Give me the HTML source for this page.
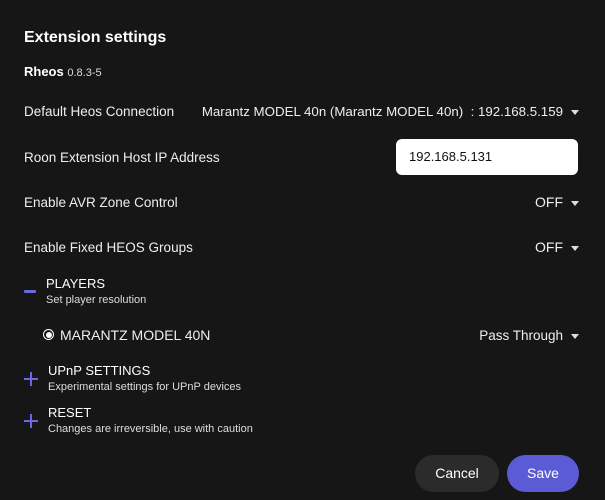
<!DOCTYPE html><html><head><style>
body{margin:0;width:605px;height:500px;background:#161616;font-family:"Liberation Sans",sans-serif;color:#fff;position:relative;overflow:hidden}
.a{position:absolute;white-space:nowrap}
.r{font-size:14px;color:#eee}
.s{font-size:11px;color:#ddd}
.arr{display:inline-block;width:0;height:0;border-left:4px solid transparent;border-right:4px solid transparent;border-top:5px solid #ddd;margin-left:8px;vertical-align:middle}
.pl{position:absolute;background:#6a6ae0}
</style></head><body>
<div class="a" style="left:24px;top:29px;font-size:16px;font-weight:bold">Extension settings</div>
<div class="a" style="left:24px;top:64px;font-size:13px"><b>Rheos</b> <span style="font-size:11px;color:#ddd">0.8.3-5</span></div>
<div class="a r" style="left:24px;top:104px;font-size:13.5px">Default Heos Connection</div>
<div class="a r" style="right:26px;top:104px;font-size:13.3px">Marantz MODEL 40n (Marantz MODEL 40n) &nbsp;: 192.168.5.159<span class="arr"></span></div>
<div class="a r" style="left:24px;top:150px;font-size:13.5px">Roon Extension Host IP Address</div>
<div class="a" style="left:396px;top:139px;width:182px;height:36px;background:#fff;border-radius:6px;color:#111;font-size:13px;line-height:36px;text-indent:13px">192.168.5.131</div>
<div class="a r" style="left:24px;top:195px;font-size:13.5px">Enable AVR Zone Control</div>
<div class="a r" style="right:26px;top:194px">OFF<span class="arr"></span></div>
<div class="a r" style="left:24px;top:240px;font-size:13.5px">Enable Fixed HEOS Groups</div>
<div class="a r" style="right:26px;top:239px">OFF<span class="arr"></span></div>
<div class="pl" style="left:24px;top:290px;width:12px;height:3px;border-radius:1px"></div>
<div class="a" style="left:46px;top:276px;font-size:13px">PLAYERS</div>
<div class="a s" style="left:46px;top:294px">Set player resolution</div>
<div class="a" style="left:43px;top:329px;width:9px;height:9px;border:1.5px solid #fff;border-radius:50%"><div style="position:absolute;left:1.5px;top:1.5px;width:6px;height:6px;border-radius:50%;background:#fff"></div></div>
<div class="a r" style="left:60px;top:327px">MARANTZ MODEL 40N</div>
<div class="a r" style="right:26px;top:328px;font-size:13.5px">Pass Through<span class="arr"></span></div>
<div class="pl" style="left:24px;top:378px;width:14px;height:2px"></div><div class="pl" style="left:30px;top:372px;width:2px;height:14px"></div>
<div class="a" style="left:48px;top:363px;font-size:13px">UPnP SETTINGS</div>
<div class="a s" style="left:48px;top:381px">Experimental settings for UPnP devices</div>
<div class="pl" style="left:24px;top:420px;width:14px;height:2px"></div><div class="pl" style="left:30px;top:414px;width:2px;height:14px"></div>
<div class="a" style="left:48px;top:405px;font-size:13px">RESET</div>
<div class="a s" style="left:48px;top:423px">Changes are irreversible, use with caution</div>
<div class="a" style="left:415px;top:455px;width:84px;height:37px;border-radius:19px;background:#2b2b2b;text-align:center;line-height:37px;font-size:14px">Cancel</div>
<div class="a" style="left:507px;top:455px;width:72px;height:37px;border-radius:19px;background:#5b5bd6;text-align:center;line-height:37px;font-size:14px">Save</div>
</body></html>
